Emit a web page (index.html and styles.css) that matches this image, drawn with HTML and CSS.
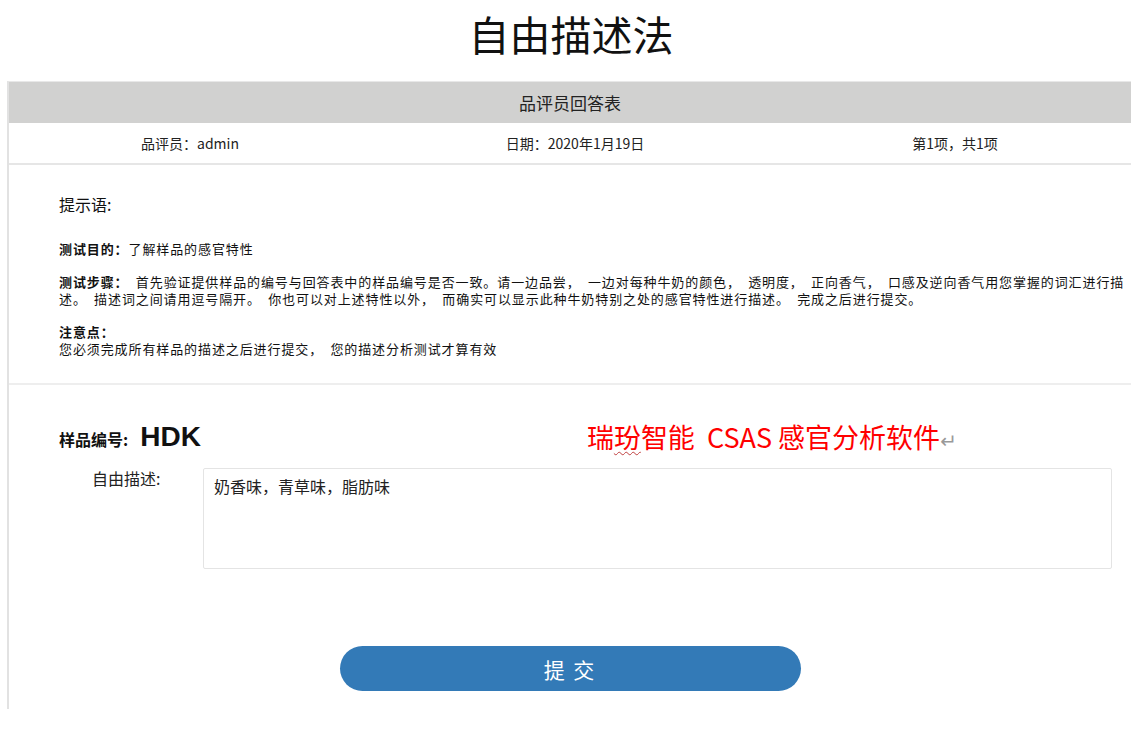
FILE: index.html
```html
<!DOCTYPE html>
<html lang="zh-CN">

<head>
    <meta charset="UTF-8">
    <meta name="viewport" content="width=device-width, initial-scale=1.0">
    <title>自由描述法</title>
    <link rel="stylesheet" href="styles.css">
</head>

<body>
    <h1 class="page-title">自由描述法</h1>

    <div class="answer-panel">
        <div class="panel-head">品评员回答表</div>

        <div class="info-row">
            <div class="info-cell">品评员：admin</div>
            <div class="info-cell">日期：2020年1月19日</div>
            <div class="info-cell">第1项，共1项</div>
        </div>

        <div class="tips">
            <div class="tips-title">提示语:</div>
            <p class="tip"><b>测试目的：</b>了解样品的感官特性</p>
            <p class="tip"><b>测试步骤：</b> 首先验证提供样品的编号与回答表中的样品编号是否一致。请一边品尝， 一边对每种牛奶的颜色， 透明度， 正向香气， 口感及逆向香气用您掌握的词汇进行描述。 描述词之间请用逗号隔开。 你也可以对上述特性以外， 而确实可以显示此种牛奶特别之处的感官特性进行描述。 完成之后进行提交。</p>
            <p class="tip"><b>注意点：</b><br>您必须完成所有样品的描述之后进行提交， 您的描述分析测试才算有效</p>
        </div>

        <div class="sample">
            <div class="sample-row">
                <span class="sample-label">样品编号:</span>
                <span class="sample-code">HDK</span>
                <span class="brand-note">瑞<span class="spell">玢</span>智能&nbsp; CSAS 感官分析软件<span class="return-mark">↵</span></span>
            </div>

            <div class="desc-row">
                <label class="desc-label" for="desc">自由描述:</label>
                <textarea class="desc-input" id="desc">奶香味，青草味，脂肪味</textarea>
            </div>

            <button class="submit-button">提 交</button>
        </div>
    </div>
</body>

</html>
```

FILE: styles.css
```css
* {
    margin: 0;
    padding: 0;
    box-sizing: border-box;
    font-family: "Noto Sans CJK SC", "Liberation Sans", sans-serif;
}

body {
    background: #fff;
    color: #111;
    overflow: hidden;
}

.page-title {
    font-size: 41px;
    font-weight: normal;
    line-height: 66px;
    text-align: center;
    margin-bottom: 15px;
    padding-left: 10px;
}

.answer-panel {
    margin-left: 7px;
    width: 1124px;
    border-left: 2px solid #e2e2e2;
    border-top: 1px solid #e8e8e8;
    padding-bottom: 18px;
}

.panel-head {
    background-color: #d1d1d0;
    height: 41px;
    line-height: 41px;
    text-align: center;
    font-size: 17px;
    color: #222;
}

.info-row {
    display: grid;
    grid-template-columns: 362px 408px 1fr;
    height: 42px;
    line-height: 40px;
    border-bottom: 2px solid #e6e6e6;
    font-size: 14px;
    color: #222;
}

.info-cell {
    text-align: center;
}

.tips {
    padding: 27px 0 26px 50px;
    border-bottom: 2px solid #eeeeee;
}

.tips-title {
    font-size: 16px;
    line-height: 24px;
    margin-bottom: 24px;
}

.tip {
    font-size: 13px;
    line-height: 17px;
    letter-spacing: 0.9px;
    word-spacing: 3.5px;
    color: #111;
    margin-bottom: 16px;
}

.tip:last-child {
    margin-bottom: 0;
}

.tip b {
    font-weight: bold;
}

.sample {
    padding: 30px 0 0 0;
}

.sample-row {
    display: flex;
    align-items: baseline;
    padding-left: 50px;
    height: 53px;
}

.sample-label {
    font-size: 16px;
    font-weight: bold;
}

.sample-code {
    font-family: "Liberation Sans", Arial, sans-serif;
    font-size: 28px;
    font-weight: bold;
    margin-left: 12px;
}

.brand-note {
    color: #ff0000;
    font-size: 27px;
    margin-left: 386px;
    position: relative;
    top: 2px;
}

.spell {
    text-decoration: underline wavy #c04040;
    text-decoration-thickness: 1px;
    text-underline-offset: 3px;
}

.return-mark {
    color: #999;
    font-size: 20px;
    font-family: "DejaVu Sans", sans-serif;
}

.desc-row {
    display: flex;
    align-items: flex-start;
    padding-left: 83px;
}

.desc-label {
    width: 111px;
    font-size: 16px;
    line-height: 20px;
    color: #222;
}

.desc-input {
    width: 909px;
    height: 101px;
    border: 1px solid #e4e4e4;
    border-radius: 2px;
    padding: 6px 10px;
    font-size: 16px;
    line-height: 22px;
    color: #222;
    resize: none;
    outline: none;
}

.submit-button {
    display: block;
    width: 461px;
    height: 45px;
    margin: 77px auto 0;
    border: none;
    border-radius: 23px;
    background-color: #337ab7;
    color: #fff;
    font-size: 21px;
    letter-spacing: 2px;
    cursor: pointer;
}
```
